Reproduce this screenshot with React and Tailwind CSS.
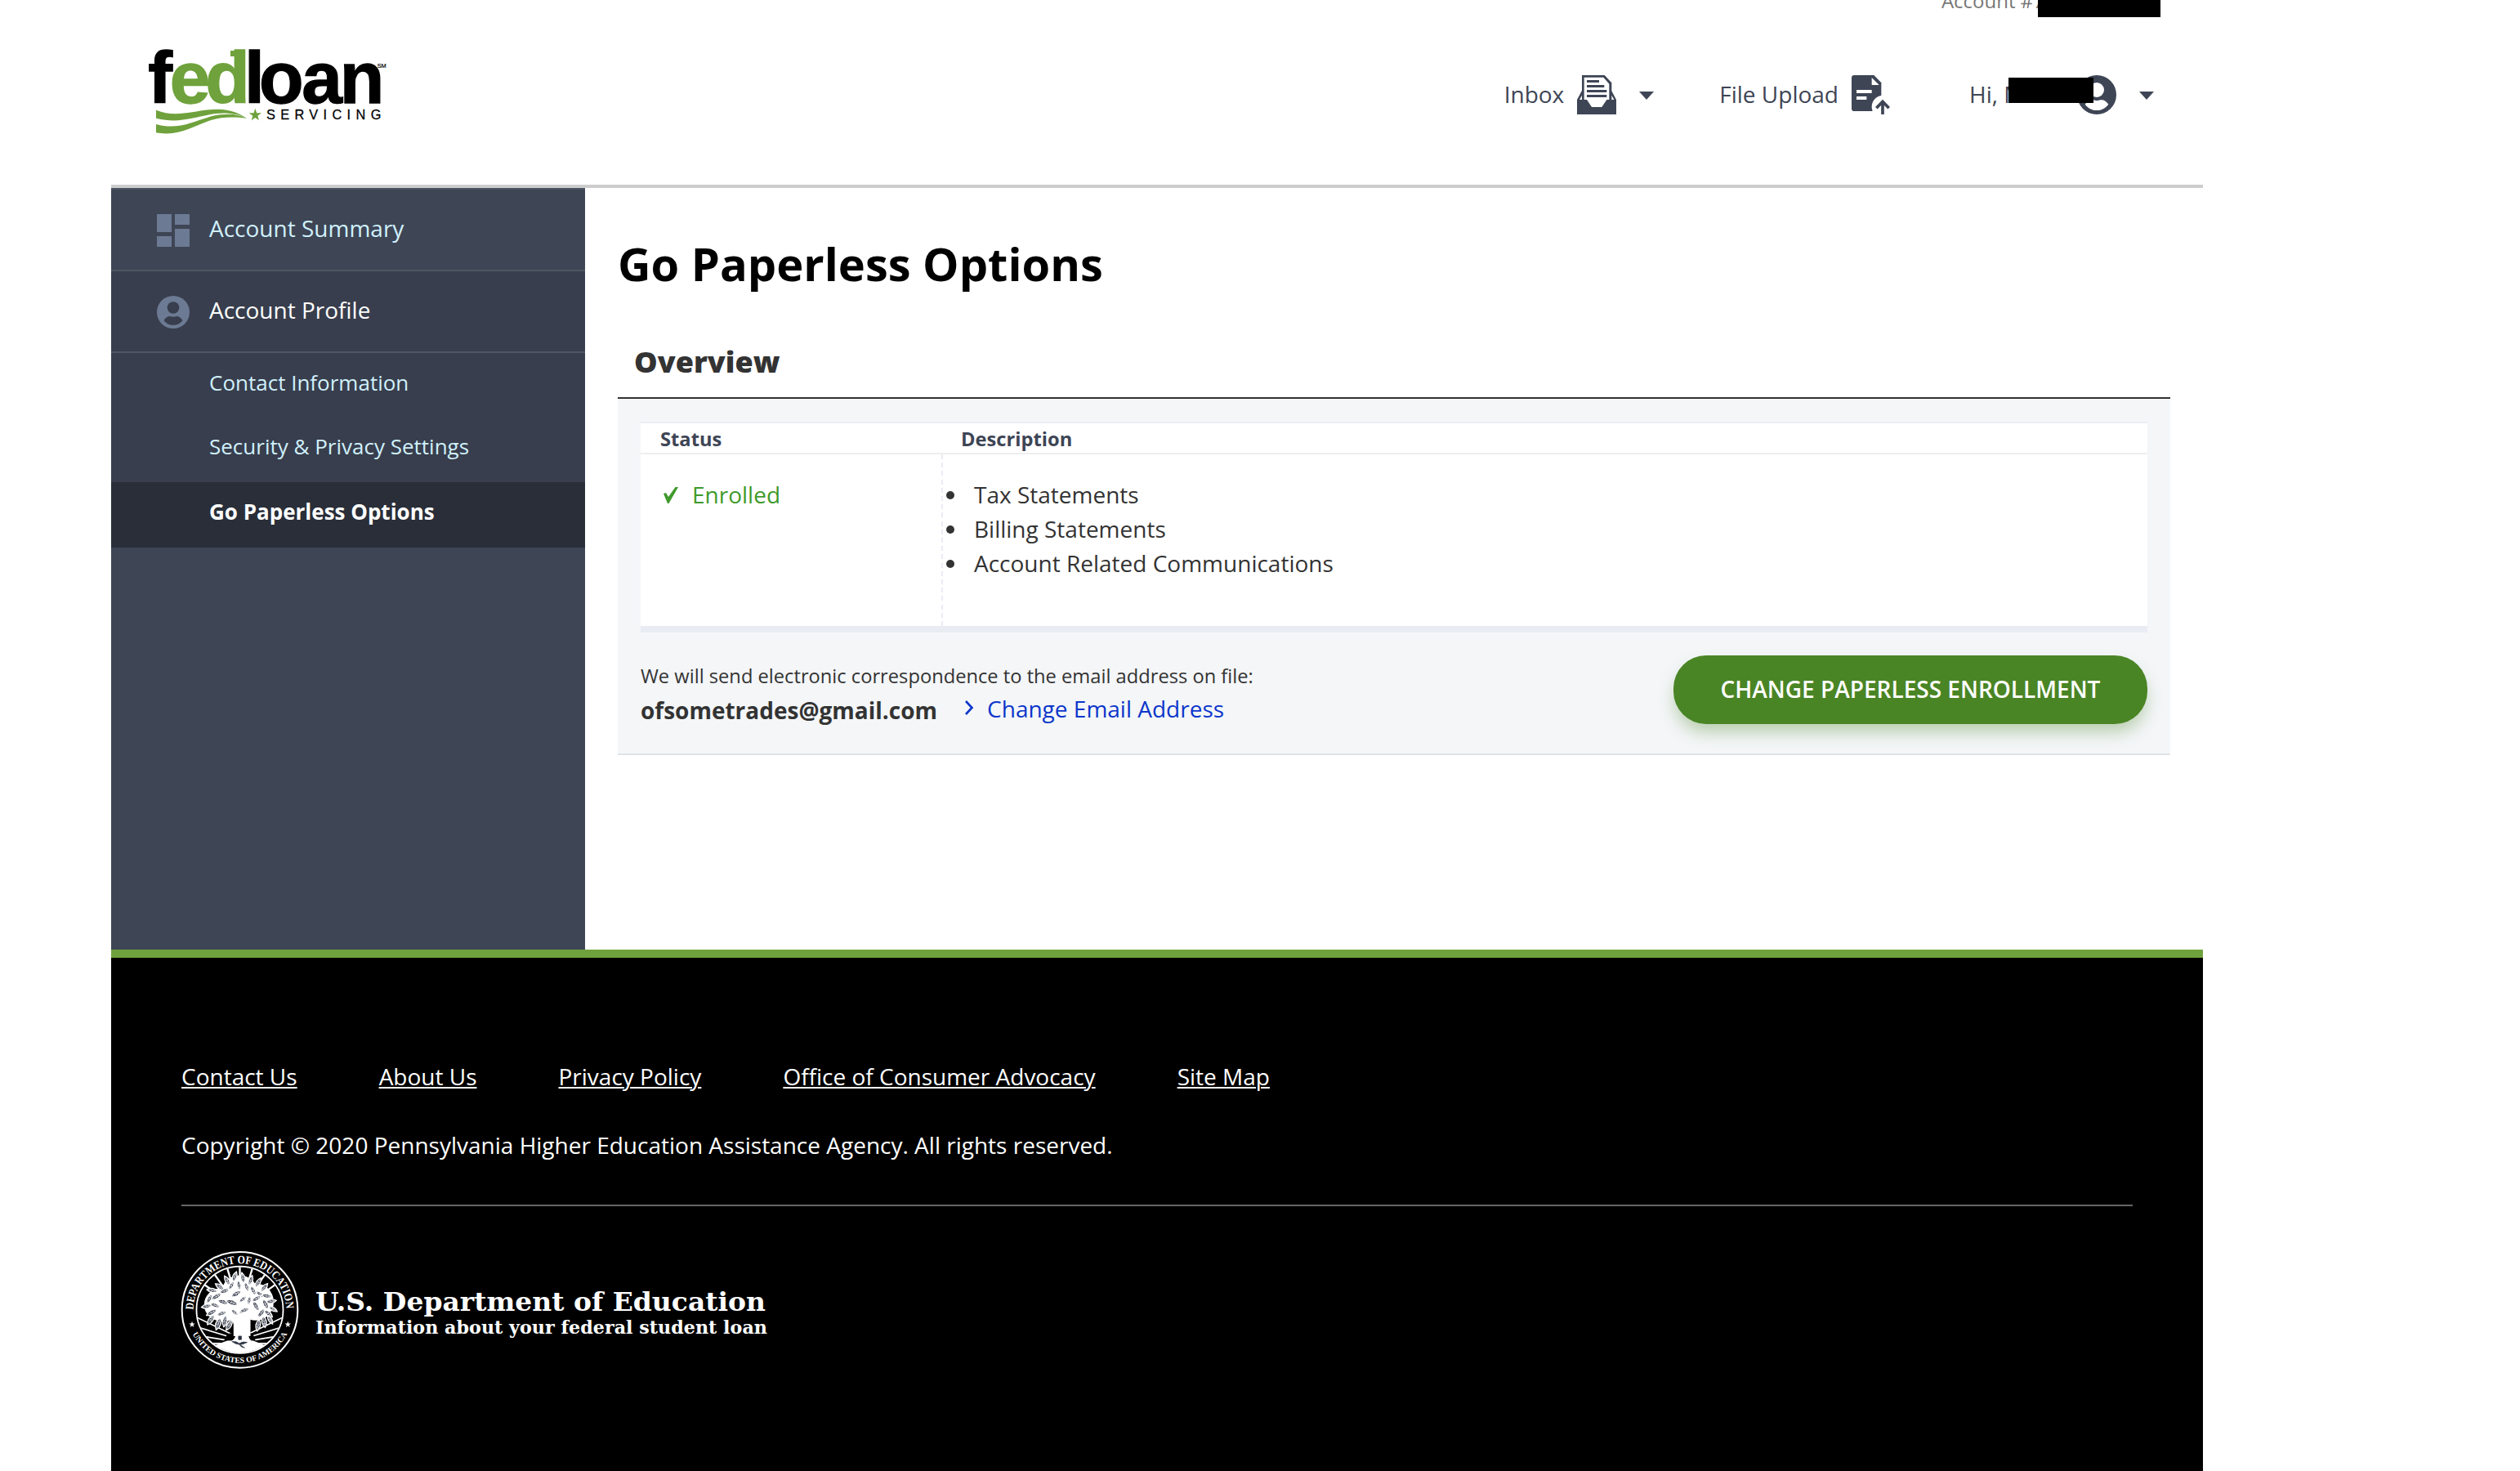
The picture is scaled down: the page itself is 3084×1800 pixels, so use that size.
import React from "react";

function FedLoanLogo() {
  return (
    <svg viewBox="180 84 885 327" className="w-[295px] h-[109px] overflow-visible">
      <g fontSize="268" fontWeight="700" fontFamily="Liberation Sans, sans-serif" strokeWidth="4">
        <text y="288" x="184" fill="#000" stroke="#000">f</text>
        <text y="288" x="263 394" fill="#6fa23c" stroke="#6fa23c">ed</text>
        <text y="288" x="537 591 748 887" fill="#000" stroke="#000">loan</text>
      </g>
      <rect x="486" y="96" width="40" height="21" fill="#6fa23c" />
      <text x="1025" y="159" fontSize="22" fontFamily="Liberation Sans, sans-serif" stroke="#000" strokeWidth="0.6">SM</text>
      <text x="618" y="348" fontSize="49" textLength="421" fontFamily="Liberation Sans, sans-serif" stroke="#000" strokeWidth="0.8">SERVICING</text>
      <g fill="#6fa23c">
        <path d="M213 314C290 346 360 311 440 311C485 311 520 326 547 345C515 327 475 322 430 327C360 338 300 366 213 344Z" />
        <path d="M213 366C310 393 370 340 450 331C490 326 520 332 547 345C500 338 455 339 415 351C350 372 300 412 213 397Z" />
        <path d="M577 308L582.5 325H600L586 335.500L591 352L577 342L563 352L568 335.500L554 325H571.500Z" />
      </g>
    </svg>
  );
}

function InboxIcon() {
  return (
    <svg viewBox="0 0 144 144" className="size-12" fill="#3e4555">
      <path d="M18 0H101L127 28V58L144 90V144H0V90L18 56ZM26 8V90H36L54 117H91L109 90H118V32L97 8ZM18 74L9 90H18ZM127 74V90H136Z" fillRule="evenodd" />
      <path d="M36 18H81V27H36ZM36 36H100V45H36ZM36 54H109V63H36ZM36 72H109V81H36Z" />
    </svg>
  );
}

function UploadIcon() {
  return (
    <svg viewBox="0 0 144 144" className="size-12">
      <path d="M10 0H82L109 28V132H10Q0 132 0 122V10Q0 0 10 0Z" fill="#3e4555" />
      <path d="M74 9V36H101ZM18 54H74V66H18ZM18 78H55V90H18Z" fill="#fff" />
      <circle cx="116" cy="116" r="42" fill="#fff" />
      <path d="M114 144V97M91 121L114 97L137 121" fill="none" stroke="#3e4555" strokeWidth="11" />
    </svg>
  );
}

function Caret() {
  return (
    <svg viewBox="0 0 18 10" className="w-[18px] h-[10px] mt-0.5" fill="#3e4555">
      <path d="M0 0H18L9 10Z" />
    </svg>
  );
}

function HeaderUserIcon() {
  return (
    <svg viewBox="0 0 144 144" className="size-12">
      <circle cx="72" cy="72" r="72" fill="#3e4555" />
      <circle cx="72" cy="54" r="27" fill="#fff" />
      <path d="M29 107C36 95 48 89 58 91Q72 96 86 91C96 89 108 95 115 107C103 122 90 129 72 129C54 129 41 122 29 107Z" fill="#fff" />
    </svg>
  );
}

function DashboardIcon() {
  return (
    <svg viewBox="0 0 40 40" className="size-10 mt-0.5" fill="#6c7a93">
      <path d="M0 0H18V22H0ZM22 0H40V13H22ZM0 27H18V40H0ZM22 18H40V40H22Z" />
    </svg>
  );
}

function ProfileIcon() {
  return (
    <svg viewBox="0 0 40 40" className="size-10 mt-0.5">
      <circle cx="20" cy="20" r="20" fill="#6c7a93" />
      <circle cx="20" cy="14.500" r="7.300" fill="#383e4d" />
      <path d="M8.500 30C11 26 14 25 16 25Q20 26.500 24 25C26 25 29 26 31.500 30C28.500 34 25 35.800 20 35.800C15 35.800 11.500 34 8.500 30Z" fill="#383e4d" />
    </svg>
  );
}

/* Leaves of the seal's tree: x, y, half length, angle */
const LEAVES = [
  [232, 128, 20, -70], [262, 132, 20, -100], [205, 142, 20, 60], [290, 142, 20, 110], [178, 165, 20, 35],
  [318, 150, 20, 120], [340, 168, 20, 130], [150, 178, 20, 10], [165, 200, 22, -30], [140, 208, 20, -60],
  [195, 180, 20, -20], [220, 160, 19, -60], [248, 158, 19, 80], [276, 165, 20, 70], [300, 178, 20, 60],
  [325, 192, 20, 40], [350, 198, 20, 10], [365, 218, 20, -10], [345, 228, 22, 60], [372, 246, 18, 30],
  [130, 236, 20, -10], [160, 232, 20, 20], [148, 258, 22, -30], [145, 285, 22, -55], [172, 300, 24, -70],
  [196, 290, 22, -80], [212, 305, 22, -60], [185, 262, 20, -20], [190, 220, 22, 15], [222, 222, 24, 20],
  [238, 190, 22, -30], [262, 210, 18, -40], [285, 215, 18, 100], [310, 235, 22, 60], [330, 260, 22, -50],
  [355, 262, 20, 40], [362, 285, 18, 60], [340, 292, 22, 80], [318, 305, 22, 100], [268, 250, 20, -20],
  [232, 258, 18, 40], [312, 208, 20, -30],
];

function EducationSeal() {
  return (
    <svg viewBox="34 34 434 434" className="size-[145px]">
      <defs>
        <path id="seal-top" d="M81 251A170 170 0 0 1 421 251" />
        <path id="seal-bottom" d="M57 249A194 194 0 0 0 445 249" />
        <clipPath id="seal-clip"><circle cx="251" cy="249" r="157" /></clipPath>
      </defs>
      <circle cx="251" cy="249" r="212" fill="#000" stroke="#fff" strokeWidth="6" />
      <circle cx="251" cy="249" r="159" fill="none" stroke="#fff" strokeWidth="5" />
      <g clipPath="url(#seal-clip)">
        <path d="M251 250V80M251 250L200 80M251 250L302 80M251 250L145 100M251 250L357 100M251 250L105 145M251 250L397 145" stroke="#fff" strokeWidth="7" />
        <path d="M225 340L90 275M220 350L90 310M215 362L110 345M205 372L130 372M277 340L412 275M282 350L412 310M287 362L392 345M297 372L372 372" stroke="#fff" strokeWidth="5" />
        <path d="M140 400C160 372 205 385 232 352C240 335 238 300 205 270L225 262L248 292L262 268L300 258C280 285 280 330 292 352C308 378 345 372 365 400L330 450H170Z" fill="#fff" />
        <path d="M192 368C200 335 215 330 232 336C228 358 212 366 192 368ZM310 368C302 335 292 330 282 336C284 358 294 366 310 368Z" fill="#000" />
        {/* dark band under the mound */}
        <path d="M140 385C190 420 312 420 362 385L380 450H120Z" fill="#000" />
        <circle cx="251" cy="249" r="159" fill="none" stroke="#fff" strokeWidth="5" />
        <path d="M160 378C200 404 302 404 342 378L300 362H205Z" fill="#fff" />
      </g>
      <ellipse cx="190" cy="230" rx="70" ry="62" fill="#fff" />
      <ellipse cx="310" cy="220" rx="65" ry="68" fill="#fff" />
      <circle cx="250" cy="190" r="68" fill="#fff" />
      <path d="M228 260H290V345H228Z" fill="#fff" />
      {LEAVES.map(([x, y, r, a]) => (
        <g key={`${x}-${y}`} transform={`translate(${x} ${y}) rotate(${a})`}>
          <path d={`M${-r} 0Q0 ${-r * 0.75} ${r} 0Q0 ${r * 0.75} ${-r} 0Z`} fill="#2b3242" stroke="#fff" strokeWidth="4" />
          <path d={`M${-r} 0H${r}M-6 -6L2 0L-6 6M4 -6L10 0L4 6`} fill="none" stroke="#fff" strokeWidth="1.8" />
        </g>
      ))}
      <path d="M246 345H257V358H246ZM222 365Q238 363 249 372Q262 363 278 368Q264 376 250 376Q236 376 222 365ZM250 374Q252 386 270 388" fill="#2b3242" stroke="#2b3242" strokeWidth="2" />
      <g fill="#fff">
        <path d="M76 291L79 299H87L80.500 304L83 312L76 307L69 312L71.500 304L65 299H73Z" />
        <path d="M427 291L430 299H438L431.500 304L434 312L427 307L420 312L422.500 304L416 299H424Z" />
      </g>
      <g fill="#fff" fontFamily="Liberation Serif, serif" fontWeight="700">
        <text fontSize="42" transform="translate(0 -2)">
          <textPath href="#seal-top" textLength="530" lengthAdjust="spacingAndGlyphs">DEPARTMENT OF EDUCATION</textPath>
        </text>
        <text fontSize="29">
          <textPath href="#seal-bottom" startOffset="91" textLength="428" lengthAdjust="spacingAndGlyphs">UNITED STATES OF AMERICA</textPath>
        </text>
      </g>
    </svg>
  );
}

function Header() {
  return (
    <header className="h-[230px] border-b-4 border-[#cdcdcd] flex justify-between">
      <div className="pl-[44px] pt-[58px]">
        <FedLoanLogo />
      </div>
      <div className="flex flex-col">
        <div className="h-[21px] flex justify-end items-start pr-[52px]">
          <span className="text-2xl leading-[2px] text-[#777] whitespace-nowrap">Account #7</span>
          <span className="w-[150px] h-[21px] bg-black relative -ml-[8px]" />
        </div>
        <nav className="mt-[71px] h-12 flex items-center pr-[60px] text-[28px] leading-[38px] text-[#3e4555] whitespace-nowrap">
          <span className="pb-0.5">Inbox</span>
          <span className="ml-4"><InboxIcon /></span>
          <span className="ml-7"><Caret /></span>
          <span className="ml-20 pb-0.5">File Upload</span>
          <span className="ml-4"><UploadIcon /></span>
          <span className="ml-24 w-[132px] flex items-center relative">
            <span className="pb-0.5">Hi, M</span>
            <span className="absolute left-[48px] -top-px w-[104px] h-[31px] bg-black z-10" />
          </span>
          <HeaderUserIcon />
          <span className="ml-7"><Caret /></span>
        </nav>
      </div>
    </header>
  );
}

function Sidebar() {
  return (
    <aside className="w-[580px] bg-[#3e4555] text-[#d0f0fb] border-t-2 border-[#4d5761]">
      <div className="h-[100px] border-b-2 border-[#4d5761] pl-14 flex items-center gap-6 text-[28px]">
        <DashboardIcon />
        <span className="pb-1">Account Summary</span>
      </div>
      <div className="h-[100px] border-b-2 border-[#4d5761] bg-[#383e4d] pl-14 flex items-center gap-6 text-[28px] text-white">
        <ProfileIcon />
        <span className="pb-1">Account Profile</span>
      </div>
      <div className="bg-[#383e4d] text-[26px]">
        <div className="h-[78px] pl-[120px] flex items-center pb-[6px]">Contact Information</div>
        <div className="h-20 pl-[120px] flex items-center pb-2">Security &amp; Privacy Settings</div>
        <div className="h-20 pl-[120px] flex items-center pb-2 bg-[#292e39] text-white font-bold">Go Paperless Options</div>
      </div>
    </aside>
  );
}

function Overview() {
  return (
    <section>
      <h2 className="h-[92px] pt-[17px] pl-5 text-[36px] leading-[60px] font-extrabold text-[#333] border-b-2 border-[#333]">Overview</h2>
      <div className="h-[436px] bg-[#f4f6f8] border-b-2 border-[#dfe3e8] px-7 pt-7">
        <div className="bg-white border-t-2 border-t-[#e9edf1] border-b-8 border-b-[#e9ecf2]">
          <div className="h-[38px] border-b-2 border-[#eee] flex text-[23.7px] leading-[38px] font-bold text-[#3e4555]">
            <div className="w-[392px] pl-6">Status</div>
            <div>Description</div>
          </div>
          <div className="h-[210px] flex text-[28px] leading-[42px]">
            <div className="w-[368px] pt-7 pl-7 flex items-start text-[#3f9a2b]">
              <svg viewBox="0 0 18 20" className="w-[18px] h-5 mt-[12px] mr-[17px]"><path d="M0 8L3 7L6 12L14.500 0H18L6.500 20H5Z" fill="#3f9a2b" /></svg>
              <span>Enrolled</span>
            </div>
            <div className="w-0.5 bg-[repeating-linear-gradient(to_bottom,#e9ecf6_0px,#e9ecf6_6px,transparent_6px,transparent_10.2px)]" />
            <ul className="pt-7 text-[#333]">
              {["Tax Statements", "Billing Statements", "Account Related Communications"].map((t) => (
                <li key={t} className="flex items-center">
                  <span className="size-[10px] rounded-full bg-[#333] ml-1 mr-6 mt-px" />
                  <span>{t}</span>
                </li>
              ))}
            </ul>
          </div>
        </div>
        <div className="flex justify-between pt-7">
          <div className="text-[#333]">
            <p className="text-[23.7px] leading-[40px] mt-[5px]">We will send electronic correspondence to the email address on file:</p>
            <p className="text-[28px] leading-[42px] flex">
              <span className="font-bold mt-px">ofsometrades@gmail.com</span>
              <svg viewBox="0 0 12 18" className="w-3 h-[18px] mt-[10px] ml-[33px] mr-[16px]"><path d="M2 1L9.500 9L2 17" fill="none" stroke="#0c36cb" strokeWidth="2.600" /></svg>
              <span className="text-[#0c36cb] -mt-px">Change Email Address</span>
            </p>
          </div>
          <button className="w-[580px] h-[84px] pb-0.5 rounded-[40px] bg-[#4a8525] text-white text-[28px] font-semibold shadow-[0_12px_20px_-2px_rgba(74,133,37,0.35)]">CHANGE PAPERLESS ENROLLMENT</button>
        </div>
      </div>
    </section>
  );
}

const FOOTER_LINKS = ["Contact Us", "About Us", "Privacy Policy", "Office of Consumer Advocacy", "Site Map"];

function Footer() {
  return (
    <footer className="h-[638px] bg-black border-t-10 border-[#6fa23c] px-[86px] pt-[124px] text-white text-[28px] leading-[42px]">
      <nav className="flex gap-[100px]">
        {FOOTER_LINKS.map((t) => (
          <a key={t} className="underline decoration-2 underline-offset-2">{t}</a>
        ))}
      </nav>
      <p className="mt-[42px]">Copyright © 2020 Pennsylvania Higher Education Assistance Agency. All rights reserved.</p>
      <div className="mt-[52px] h-0.5 bg-[#666]" />
      <div className="flex mt-[55px] -ml-px gap-[19px]">
        <EducationSeal />
        <svg viewBox="0 0 560 80" className="w-[560px] h-20 mt-[42px]" fill="#fff" fontFamily="DejaVu Serif, serif" fontWeight="700">
          <text x="1" y="31" fontSize="32" textLength="551" lengthAdjust="spacingAndGlyphs">U.S. Department of Education</text>
          <text x="1" y="59" fontSize="21.500" textLength="553" lengthAdjust="spacingAndGlyphs">Information about your federal student loan</text>
        </svg>
      </div>
    </footer>
  );
}

export default function App() {
  return (
    <div className="w-full h-[1800px] overflow-hidden bg-white font-['Open_Sans',sans-serif]">
      <div className="w-[2560px] ml-[136px]">
        <Header />
        <div className="flex h-[932px]">
          <Sidebar />
          <main className="w-[1980px] px-10 pt-[50px]">
            <h1 className="text-[56px] leading-[84px] h-[116px] font-bold text-black">Go Paperless Options</h1>
            <Overview />
          </main>
        </div>
        <Footer />
      </div>
    </div>
  );
}
